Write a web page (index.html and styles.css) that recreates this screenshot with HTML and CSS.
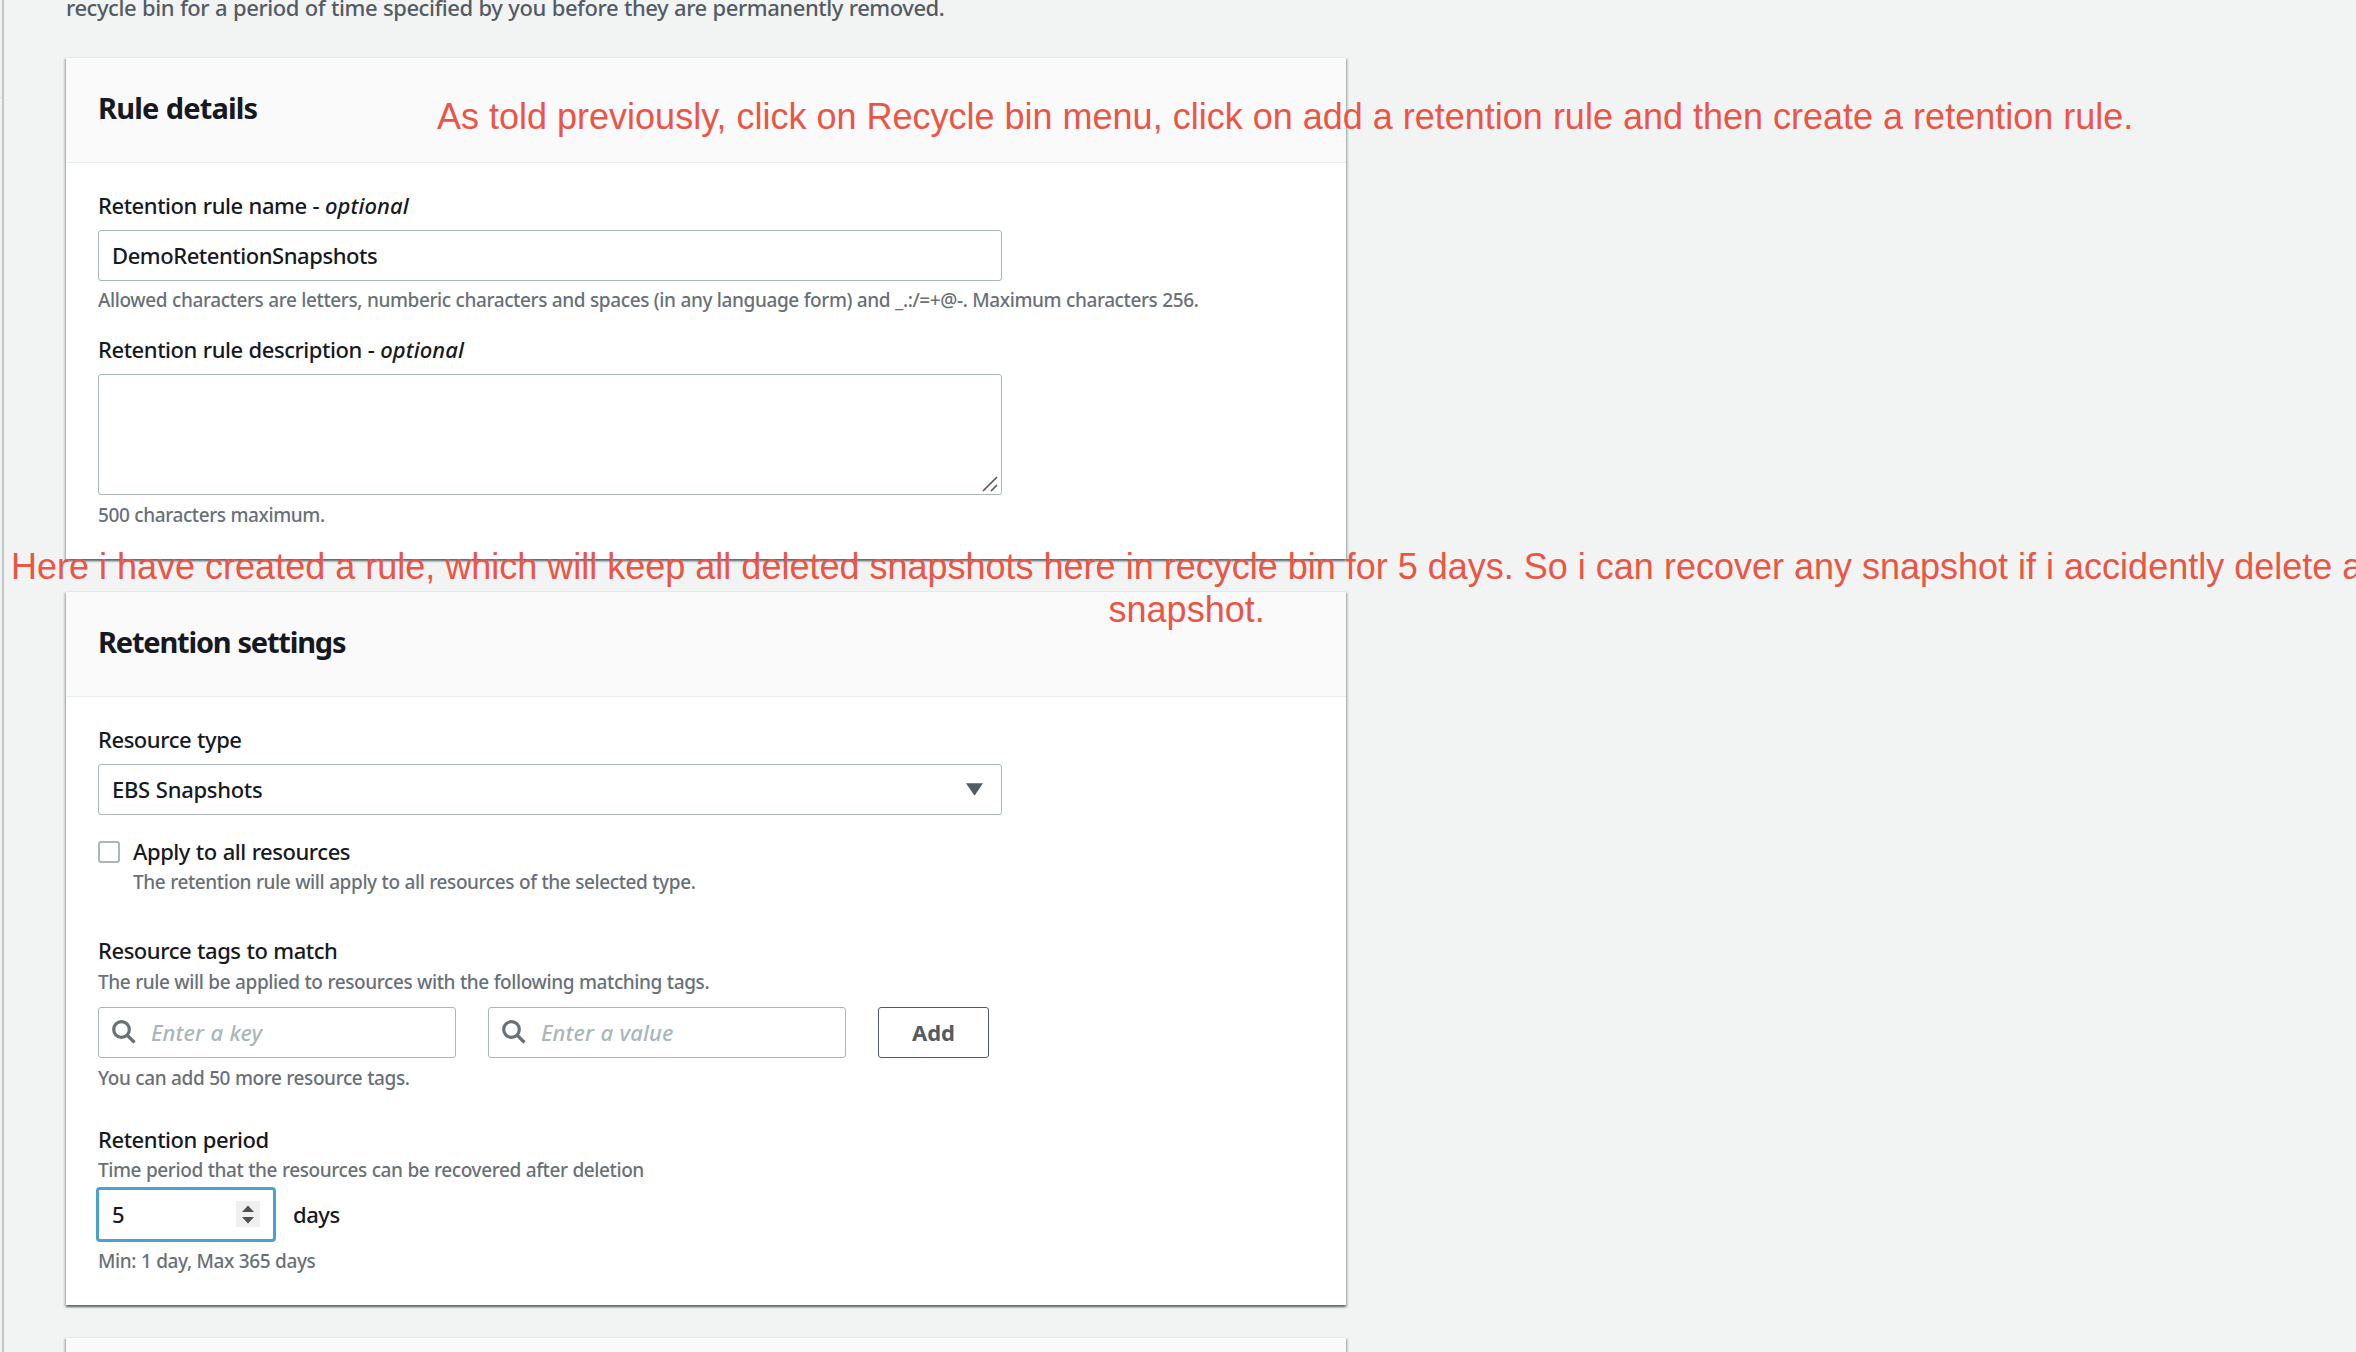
FILE: index.html
```html
<!DOCTYPE html>
<html lang="en">
<head>
<meta charset="utf-8">
<title>Create retention rule</title>
<link rel="stylesheet" href="styles.css">
</head>
<body>
<aside class="nav-edge"><span class="nav-divider"></span></aside>
<main class="content">
  <p class="intro">recycle bin for a period of time specified by you before they are permanently removed.</p>

  <section class="card">
    <header class="card-header"><h2>Rule details</h2></header>
    <div class="card-body">
      <label class="label">Retention rule name - <i>optional</i></label>
      <div class="field">DemoRetentionSnapshots</div>
      <p class="hint hint-below">Allowed characters are letters, numberic characters and spaces (in any language form) and _.:/=+@-. Maximum characters 256.</p>
      <label class="label label-next">Retention rule description - <i>optional</i></label>
      <div class="field textarea">
        <svg class="grip" viewBox="0 0 16 16"><path d="M1 15 15 1M9 15l6-6"/></svg>
      </div>
      <p class="hint hint-tags">500 characters maximum.</p>
    </div>
  </section>

  <section class="card settings">
    <header class="card-header"><h2 class="tight">Retention settings</h2></header>
    <div class="card-body">
      <label class="label">Resource type</label>
      <div class="field select">EBS Snapshots
        <svg class="caret" viewBox="0 0 18 13"><path d="M0 0h18L9 13z"/></svg>
      </div>
      <div class="check-row">
        <span class="checkbox"></span>
        <div>
          <label class="label">Apply to all resources</label>
          <p class="hint">The retention rule will apply to all resources of the selected type.</p>
        </div>
      </div>
      <label class="label label-tags">Resource tags to match</label>
      <p class="hint">The rule will be applied to resources with the following matching tags.</p>
      <div class="tag-row">
        <div class="field search">
          <svg class="lens" viewBox="0 0 24 24"><circle cx="9.5" cy="9.5" r="7.8"/><path d="m15 15 7.5 7.5"/></svg>
          <i>Enter a key</i>
        </div>
        <div class="field search">
          <svg class="lens" viewBox="0 0 24 24"><circle cx="9.5" cy="9.5" r="7.8"/><path d="m15 15 7.5 7.5"/></svg>
          <i>Enter a value</i>
        </div>
        <button class="add">Add</button>
      </div>
      <p class="hint hint-tags">You can add 50 more resource tags.</p>
      <label class="label label-period">Retention period</label>
      <p class="hint">Time period that the resources can be recovered after deletion</p>
      <div class="period-row">
        <div class="field number">5
          <span class="spinner"><svg viewBox="0 0 24 26"><path d="M6 11l6-6.500 6 6.500zM6 16h12l-6 6.500z"/></svg></span>
        </div>
        <span class="unit">days</span>
      </div>
      <p class="hint hint-below">Min: 1 day, Max 365 days</p>
    </div>
  </section>

  <section class="card card-next"></section>
</main>
<p class="note note-first">As told previously, click on Recycle bin menu, click on add a retention rule and then create a retention rule.</p>
<p class="note note-second">Here i have created a rule, which will keep all deleted snapshots here in recycle bin for 5 days. So i can recover any snapshot if i accidently delete a<br>snapshot.</p>
</body>
</html>
```
FILE: styles.css
```css
* { box-sizing: border-box; }
body {
  margin: 0;
  height: 1352px;
  overflow: hidden;
  position: relative;
  display: flex;
  background: #f2f4f3;
  color: #16191f;
  font: 500 22px/32px "Noto Sans", "Open Sans", sans-serif;
  letter-spacing: -0.45px;
  word-spacing: 0.6px;
}
h2, p { margin: 0; }
i { letter-spacing: 0.1px; }
.nav-edge {
  flex: none;
  width: 4px;
  border-right: 2px solid #c2c8c8;
  padding-top: 97px;
}
.nav-divider { display: block; height: 1px; background: #dfe3e3; }
.content {
  flex: none;
  width: 1342px;
  padding-left: 62px;
}
.intro { height: 57px; margin-top: -9px; margin-bottom: 9px; color: #545b64; }
.card {
  margin-bottom: 32px;
  background: #fff;
  border-top: 1px solid #e6eaea;
  box-shadow: 0 2px 2px rgba(0, 28, 36, .5), 2px 2px 2px rgba(0, 28, 36, .15), -2px 2px 2px rgba(0, 28, 36, .15);
  height: 502px;
}
.settings { height: 714px; }
.card-next { height: 15px; margin-bottom: 0; background: #fafafa; }
.card-header {
  height: 105px;
  padding: 33px 32px;
  background: #fafafa;
  border-bottom: 1px solid #eaeded;
}
h2 { font-size: 29px; line-height: 34px; font-weight: 700; letter-spacing: -0.85px; }
h2.tight { letter-spacing: -1.2px; }
.card-body { padding: 26px 32px 0; }
.label { display: block; }
.label-next { margin-top: 18px; }
.label-tags { margin-bottom: 1px; }
.hint { font-size: 19px; line-height: 30px; color: #687078; letter-spacing: -0.4px; word-spacing: 0.3px; white-space: nowrap; }
.hint-below { margin-top: 4px; }
.hint-tags { margin-top: 5px; }
.field {
  display: flex;
  align-items: center;
  width: 904px;
  height: 51px;
  margin-top: 9px;
  padding: 0 13px 1px;
  border: 1.5px solid #aab7b8;
  border-radius: 3px;
  background: #fff;
}
.textarea { height: 121px; align-items: flex-end; justify-content: flex-end; padding: 2px 3px; }
.grip { width: 16px; height: 16px; fill: none; stroke: #555; stroke-width: 1.6; }
.select { justify-content: space-between; padding-right: 18px; letter-spacing: -0.3px; }
.caret { width: 17px; height: 13px; fill: #545b64; }
.check-row { display: flex; gap: 13px; margin: 20px 0 37px; }
.checkbox { width: 22px; height: 22px; margin-top: 6px; border: 2px solid #aab7b8; border-radius: 3px; }
.tag-row { display: flex; gap: 32px; margin-top: 10px; }
.search { width: 358px; margin: 0; gap: 15px; color: #aab7b8; }
.lens { width: 24px; height: 24px; fill: none; stroke: #687078; stroke-width: 3.2; }
.add {
  width: 111px;
  height: 51px;
  padding: 0 0 2px;
  border: 1.5px solid #545b64;
  border-radius: 3px;
  background: #fff;
  color: #545b64;
  font: 700 22px "Noto Sans", sans-serif;
}
.label-period { margin-top: 30px; }
.period-row { display: flex; align-items: center; gap: 17px; margin: 2px 0 0 -2px; }
.number { width: 180px; height: 55px; margin: 0; justify-content: space-between; border: 3px solid #4aa3cd; border-radius: 4px; }
.unit { padding-bottom: 1px; }
.spinner { width: 24px; height: 26px; background: #efefef; }
.spinner svg { display: block; width: 24px; height: 26px; fill: #505050; }
.note {
  position: absolute;
  color: #eb5545;
  font: 36px/43px "Liberation Sans", Arial, sans-serif;
  letter-spacing: 0;
  word-spacing: 0;
  text-align: center;
  white-space: nowrap;
}
.note-first { left: 437px; top: 95px; }
.note-second { left: 11px; top: 545px; }
```
